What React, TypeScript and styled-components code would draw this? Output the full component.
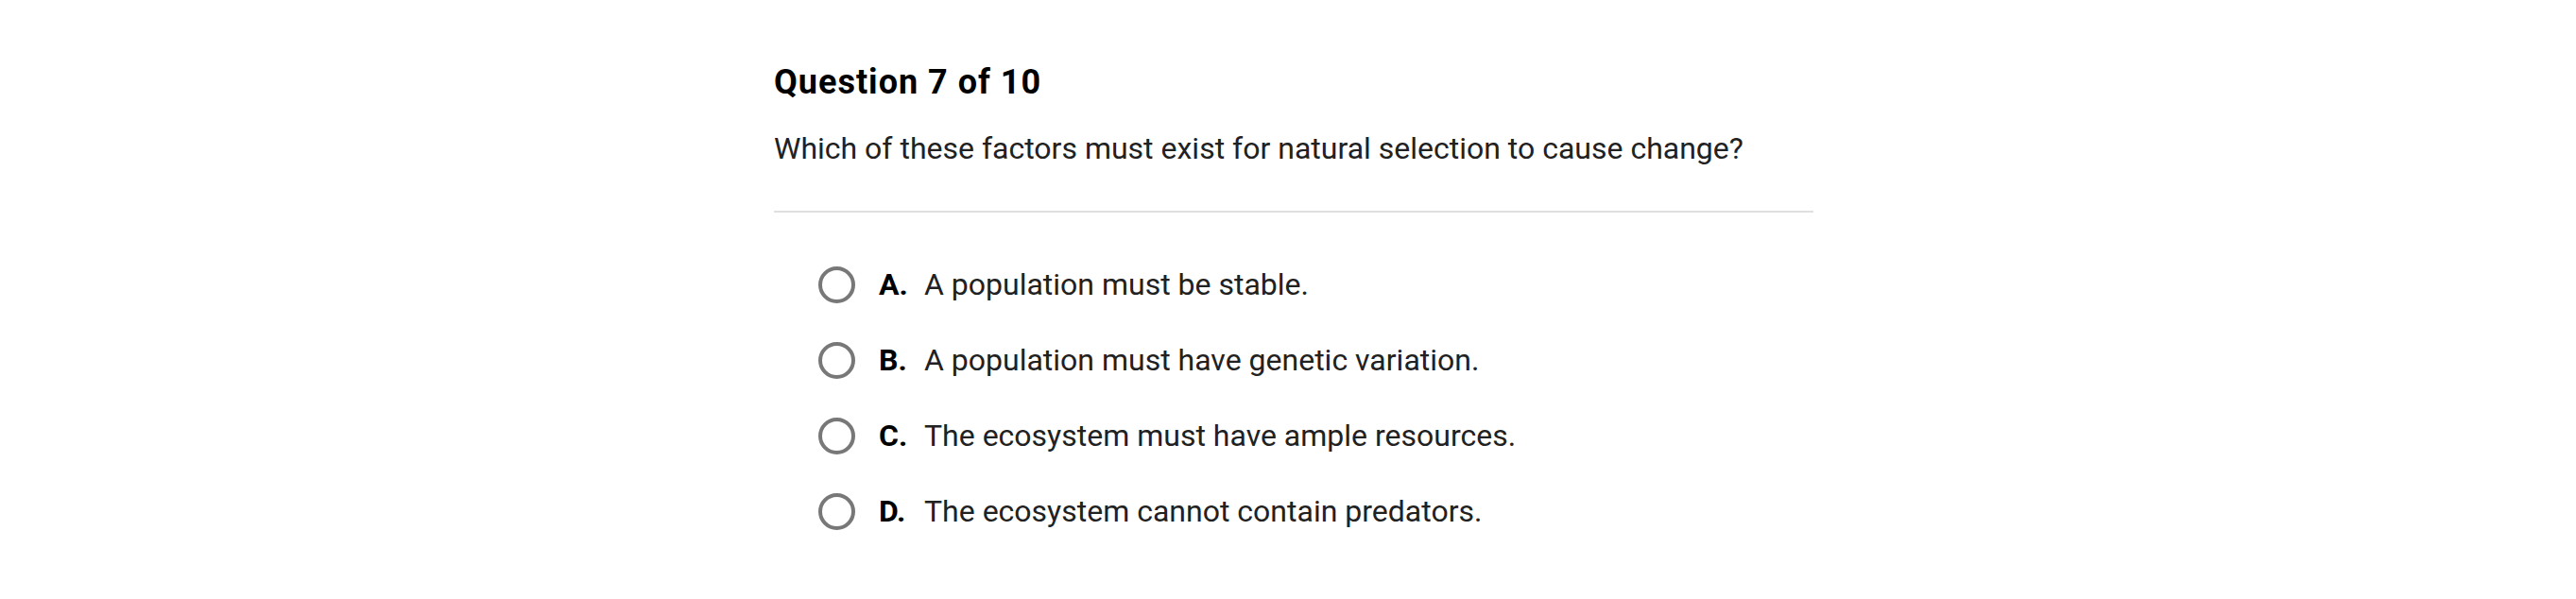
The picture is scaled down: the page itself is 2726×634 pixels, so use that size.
import React from 'react';
import styled, { createGlobalStyle } from 'styled-components';

const GlobalStyle = createGlobalStyle`
  * {
    box-sizing: border-box;
  }
  body {
    margin: 0;
    background: #ffffff;
    font-family: Roboto, "Liberation Sans", sans-serif;
    color: #212121;
  }
`;

const Page = styled.div`
  width: 2726px;
  height: 634px;
  padding-top: 62px;
`;

const Quiz = styled.div`
  width: 1100px;
  margin-left: 819px;
`;

const Title = styled.h2`
  margin: 0;
  font-size: 36px;
  line-height: 50px;
  font-weight: 700;
  letter-spacing: 1px;
  color: #000000;
`;

const Prompt = styled.p`
  margin: 23px 0 0 0;
  font-size: 32px;
  line-height: 44px;
  color: #212121;
`;

const Divider = styled.hr`
  margin: 44px 0 0 0;
  border: none;
  height: 2px;
  background: #e0e0e0;
`;

const Options = styled.ul`
  list-style: none;
  margin: 0;
  padding: 56px 0 0 47px;
  display: flex;
  flex-direction: column;
  gap: 40px;
`;

const Option = styled.li`
  display: flex;
  align-items: center;
  height: 40px;
  font-size: 32px;
`;

const Radio = styled.span`
  width: 39px;
  height: 39px;
  border-radius: 50%;
  border: 4.5px solid #787878;
  flex-shrink: 0;
  margin-right: 25px;
`;

const Letter = styled.span`
  font-weight: 700;
  width: 48px;
  color: #000000;
`;

const Answer = styled.span`
  color: #212121;
`;

const answers = [
  { letter: 'A.', text: 'A population must be stable.' },
  { letter: 'B.', text: 'A population must have genetic variation.' },
  { letter: 'C.', text: 'The ecosystem must have ample resources.' },
  { letter: 'D.', text: 'The ecosystem cannot contain predators.' },
];

export default function App() {
  return (
    <Page>
      <GlobalStyle />
      <Quiz>
        <Title>Question 7 of 10</Title>
        <Prompt>Which of these factors must exist for natural selection to cause change?</Prompt>
        <Divider />
        <Options>
          {answers.map((a) => (
            <Option key={a.letter}>
              <Radio />
              <Letter>{a.letter}</Letter>
              <Answer>{a.text}</Answer>
            </Option>
          ))}
        </Options>
      </Quiz>
    </Page>
  );
}
